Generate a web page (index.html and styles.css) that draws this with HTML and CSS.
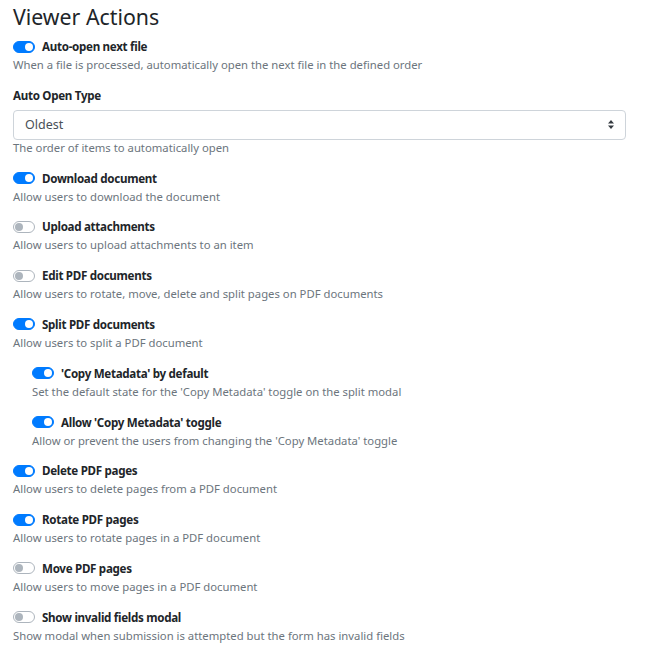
FILE: index.html
```html
<!DOCTYPE html>
<html>
<head>
    <title>Viewer Actions</title>
    <link rel="stylesheet" href="styles.css">
</head>
<body>
    <div class="settings">
        <h4 class="title">Viewer Actions</h4>

        <div class="option">
            <label class="switch-row"><span class="switch on"></span><span class="label">Auto-open next file</span></label>
            <div class="help">When a file is processed, automatically open the next file in the defined order</div>
        </div>

        <div class="option">
            <div class="field-label">Auto Open Type</div>
            <div class="select">Oldest<span class="caret"><svg width="8" height="11" viewBox="0 0 8 11"><path d="M4 1 L7 4.5 H1 Z M4 10 L7 6.5 H1 Z" fill="#343a40"/></svg></span></div>
            <div class="help">The order of items to automatically open</div>
        </div>

        <div class="option">
            <label class="switch-row"><span class="switch on"></span><span class="label">Download document</span></label>
            <div class="help">Allow users to download the document</div>
        </div>

        <div class="option">
            <label class="switch-row"><span class="switch"></span><span class="label">Upload attachments</span></label>
            <div class="help">Allow users to upload attachments to an item</div>
        </div>

        <div class="option">
            <label class="switch-row"><span class="switch"></span><span class="label">Edit PDF documents</span></label>
            <div class="help">Allow users to rotate, move, delete and split pages on PDF documents</div>
        </div>

        <div class="option">
            <label class="switch-row"><span class="switch on"></span><span class="label">Split PDF documents</span></label>
            <div class="help">Allow users to split a PDF document</div>
        </div>

        <div class="option nested">
            <label class="switch-row"><span class="switch on"></span><span class="label">'Copy Metadata' by default</span></label>
            <div class="help">Set the default state for the 'Copy Metadata' toggle on the split modal</div>
        </div>

        <div class="option nested">
            <label class="switch-row"><span class="switch on"></span><span class="label">Allow 'Copy Metadata' toggle</span></label>
            <div class="help">Allow or prevent the users from changing the 'Copy Metadata' toggle</div>
        </div>

        <div class="option">
            <label class="switch-row"><span class="switch on"></span><span class="label">Delete PDF pages</span></label>
            <div class="help">Allow users to delete pages from a PDF document</div>
        </div>

        <div class="option">
            <label class="switch-row"><span class="switch on"></span><span class="label">Rotate PDF pages</span></label>
            <div class="help">Allow users to rotate pages in a PDF document</div>
        </div>

        <div class="option">
            <label class="switch-row"><span class="switch"></span><span class="label">Move PDF pages</span></label>
            <div class="help">Allow users to move pages in a PDF document</div>
        </div>

        <div class="option">
            <label class="switch-row"><span class="switch"></span><span class="label">Show invalid fields modal</span></label>
            <div class="help">Show modal when submission is attempted but the form has invalid fields</div>
        </div>
    </div>
</body>
</html>
```

FILE: styles.css
```css
body {
    margin: 0;
    background: #ffffff;
    font-family: "Noto Sans", "Open Sans", sans-serif;
    color: #212529;
}
.settings {
    padding: 2px 22px 0 13px;
}
.title {
    margin: 0 0 5px 0;
    font-size: 21.3px;
    font-weight: 400;
    line-height: 30px;
}
.option {
    margin-bottom: 11.8px;
}
.option.nested {
    padding-left: 19px;
}
.switch-row {
    display: flex;
    align-items: center;
    height: 19px;
}
.switch {
    position: relative;
    width: 20px;
    height: 10px;
    border: 1px solid #adb5bd;
    border-radius: 6px;
    background: #ffffff;
    margin-right: 7px;
}
.switch::after {
    content: "";
    position: absolute;
    top: 1px;
    left: 1px;
    width: 8px;
    height: 8px;
    border-radius: 50%;
    background: #adb5bd;
}
.switch.on {
    background: #007bff;
    border-color: #007bff;
}
.switch.on::after {
    left: 11px;
    background: #ffffff;
}
.label {
    font-size: 11.6px;
    font-weight: 700;
    letter-spacing: -0.3px;
}
.help {
    font-size: 11.3px;
    color: #6c757d;
    line-height: 18px;
}
.field-label {
    font-size: 11.6px;
    font-weight: 700;
    letter-spacing: -0.3px;
    line-height: 19px;
    margin: 8px 0 5px 0;
}
.select {
    display: flex;
    align-items: center;
    justify-content: space-between;
    height: 28px;
    border: 1px solid #ced4da;
    border-radius: 4px;
    padding: 0 10px 0 11px;
    font-size: 12.5px;
    color: #495057;
    margin-bottom: -1px;
}
.caret {
    display: flex;
}
```
